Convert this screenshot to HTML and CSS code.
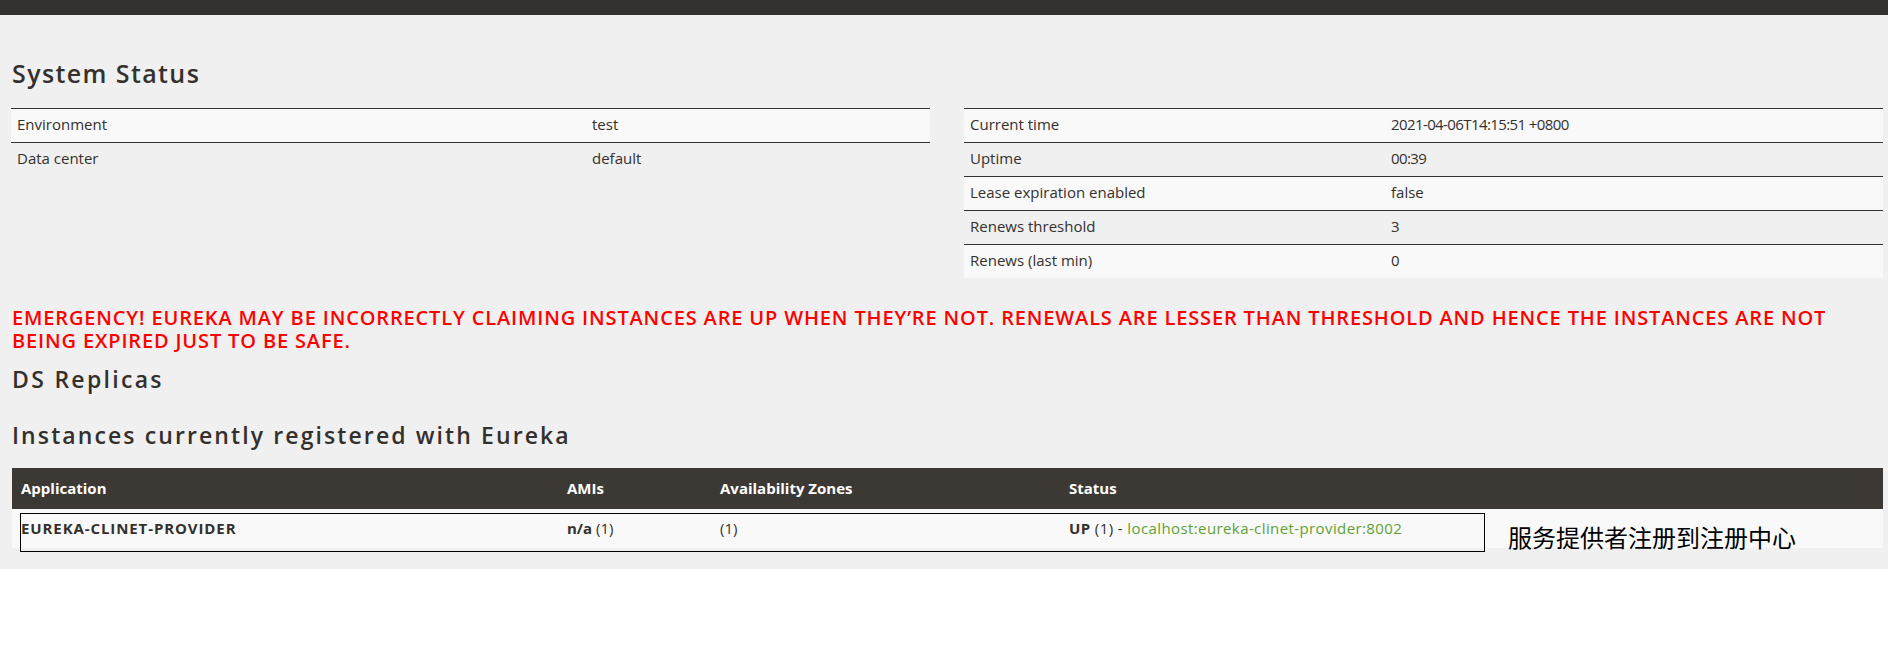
FILE: index.html
```html
<!DOCTYPE html>
<html lang="en">
<head>
<meta charset="utf-8">
<title>Eureka</title>
<link rel="stylesheet" href="styles.css">
</head>
<body>
<div class="page">
  <div class="topbar"></div>
  <div class="container">
    <h1 class="title">System Status</h1>
    <div class="status-grid">
      <table class="kv kv-left">
        <tbody>
          <tr><td class="k">Environment</td><td>test</td></tr>
          <tr><td class="k">Data center</td><td>default</td></tr>
        </tbody>
      </table>
      <table class="kv kv-right">
        <tbody>
          <tr><td class="k">Current time</td><td class="num">2021-04-06T14:15:51 +0800</td></tr>
          <tr><td class="k">Uptime</td><td class="num">00:39</td></tr>
          <tr><td class="k">Lease expiration enabled</td><td>false</td></tr>
          <tr><td class="k">Renews threshold</td><td class="num">3</td></tr>
          <tr><td class="k">Renews (last min)</td><td class="num">0</td></tr>
        </tbody>
      </table>
    </div>
    <h4 class="emergency">EMERGENCY! EUREKA MAY BE INCORRECTLY CLAIMING INSTANCES ARE UP WHEN THEY’RE NOT. RENEWALS ARE LESSER THAN THRESHOLD AND HENCE THE INSTANCES ARE NOT<br>BEING EXPIRED JUST TO BE SAFE.</h4>
    <h2 class="sub">DS Replicas</h2>
    <h2 class="sub sub-instances">Instances currently registered with Eureka</h2>
    <div class="instances-wrap">
      <table class="instances">
        <thead>
          <tr>
            <th class="c-app">Application</th>
            <th class="c-ami">AMIs</th>
            <th class="c-zone">Availability Zones</th>
            <th class="c-status">Status</th>
          </tr>
        </thead>
        <tbody>
          <tr>
            <td><b class="app-name">EUREKA-CLINET-PROVIDER</b></td>
            <td><b>n/a</b> (1)</td>
            <td>(1)</td>
            <td class="status-cell"><b>UP</b> (1) - <a class="link" href="#">localhost:eureka-clinet-provider:8002</a></td>
          </tr>
        </tbody>
      </table>
      <div class="annot-box"></div>
      <div class="annot-text">服务提供者注册到注册中心</div>
    </div>
  </div>
</div>
</body>
</html>
```

FILE: styles.css
```css
html, body {
  margin: 0;
  padding: 0;
  background: #ffffff;
}
body {
  font-family: "Open Sans", "Noto Sans", "Liberation Sans", sans-serif;
  color: #34302d;
  font-size: 15px;
}
.page {
  background: #f0f0f0;
  padding-bottom: 21px;
}
.topbar {
  height: 15px;
  background: #34302d;
}
.container {
  padding: 0 5px 0 11px;
}
.title {
  margin: 43px 0 20px 1px;
  font-size: 25px;
  line-height: 30px;
  font-weight: 600;
  letter-spacing: 1.4px;
  color: #34302d;
}
.status-grid {
  display: grid;
  grid-template-columns: 1fr 1fr;
  column-gap: 34px;
  align-items: start;
}
.kv {
  width: 100%;
  border-collapse: collapse;
  table-layout: fixed;
}
.kv td {
  padding: 7px 6px 9px;
  line-height: 17px;
  font-size: 15px;
  border-top: 1px solid #34302d;
  color: #34302d;
}
.kv td.num {
  letter-spacing: -0.6px;
}
.kv tr:nth-child(odd) td {
  background: #f9f9f9;
}
.kv-left td.k { width: 563px; }
.kv-right td.k { width: 409px; }
.emergency {
  margin: 28px 0 0 1px;
  font-size: 20px;
  line-height: 23px;
  font-weight: 600;
  letter-spacing: 0.85px;
  color: #ff0000;
}
.sub {
  margin: 13px 0 0 1px;
  font-size: 23px;
  line-height: 28px;
  font-weight: 600;
  letter-spacing: 2.3px;
  color: #34302d;
}
.sub-instances {
  margin-top: 28px;
  letter-spacing: 2.1px;
}
.instances-wrap {
  position: relative;
  margin-top: 19px;
  margin-left: 1px;
}
.instances {
  width: 100%;
  border-collapse: collapse;
  table-layout: fixed;
}
.instances th {
  background: #3c3834;
  color: #ffffff;
  text-align: left;
  font-weight: 700;
  padding: 12px 9px;
  line-height: 17px;
  font-size: 15px;
}
.instances td {
  background: #f9f9f9;
  padding: 11px 9px;
  line-height: 17px;
  font-size: 15px;
  vertical-align: top;
  color: #34302d;
}
.app-name {
  letter-spacing: 0.9px;
}
.status-cell {
  letter-spacing: 0.4px;
}
.c-app { width: 528px; }
.c-ami { width: 135px; }
.c-zone { width: 331px; }
.link {
  color: #5fa134;
  text-decoration: none;
}
.annot-box {
  position: absolute;
  left: 8px;
  top: 45px;
  width: 1463px;
  height: 37px;
  border: 1px solid #000000;
}
.annot-text {
  position: absolute;
  left: 1496px;
  top: 54px;
  font-family: "Noto Sans CJK SC", sans-serif;
  font-size: 24px;
  line-height: 30px;
  color: #000000;
}
```
